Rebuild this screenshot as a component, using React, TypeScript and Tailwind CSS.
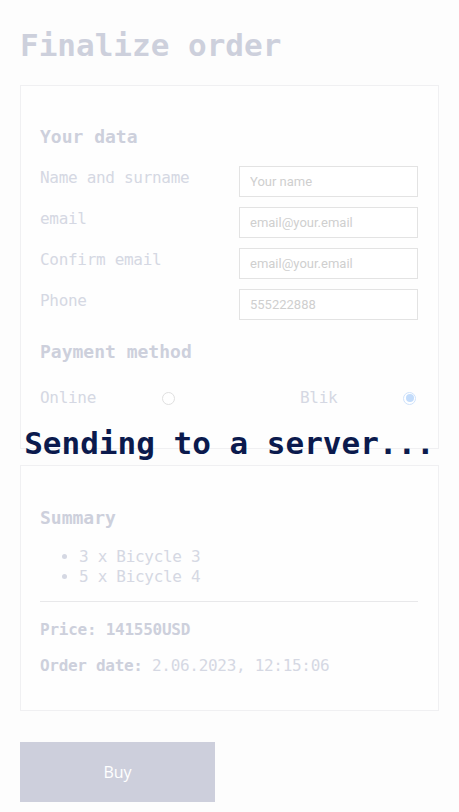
import React from "react";

const mono = { fontFamily: '"DejaVu Sans Mono", "Liberation Mono", monospace' };

function Row({ label, placeholder }: { label: string; placeholder: string }) {
  return (
    <div className="flex items-start justify-between">
      <span className="text-[16px] leading-[24px] text-[#d5d8e3] tracking-[-0.3px]">{label}</span>
      <input
        readOnly
        placeholder={placeholder}
        className="w-[179px] h-[31px] border border-[#e3e3e3] bg-white px-[10px] text-[13px] outline-none placeholder:text-[#cfcfcf]"
        style={{ fontFamily: 'Roboto, "Liberation Sans", sans-serif' }}
      />
    </div>
  );
}

function Radio({ checked }: { checked?: boolean }) {
  return checked ? (
    <span className="w-[13px] h-[13px] rounded-full border border-[#cfe2fb] bg-white flex items-center justify-center">
      <span className="w-[8px] h-[8px] rounded-full bg-[#c3dcfb]" />
    </span>
  ) : (
    <span className="w-[13px] h-[13px] rounded-full border border-[#e0e0e0] bg-white" />
  );
}

export default function App() {
  return (
    <div className="relative min-h-[886px] bg-[#fdfdfd] px-[20px] pb-[84px]" style={mono}>
      <h1 className="pt-[26px] text-[31px] leading-[38px] font-bold text-[#cdd0dc] tracking-[0px]">
        Finalize order
      </h1>

      <section className="mt-[21px] border border-[#f0f0f2] bg-[#fefefe] pl-[19px] pr-[20px] pt-[39px] pb-[38px]">
        <h2 className="text-[18px] leading-[24px] font-bold text-[#cdd0dc]">Your data</h2>
        <div className="mt-[17px] flex flex-col gap-[10px]">
          <Row label="Name and surname" placeholder="Your name" />
          <Row label="email" placeholder="email@your.email" />
          <Row label="Confirm email" placeholder="email@your.email" />
          <Row label="Phone" placeholder="555222888" />
        </div>
        <h2 className="mt-[20px] text-[18px] leading-[24px] font-bold text-[#cdd0dc]">Payment method</h2>
        <div className="mt-[22px] flex items-center text-[16px] leading-[24px] text-[#d5d8e3] tracking-[-0.3px]">
          <span className="w-[122px]">Online</span>
          <Radio />
          <span className="ml-[125px] w-[103px]">Blik</span>
          <Radio checked />
        </div>
      </section>

      <section className="mt-[16px] border border-[#f0f0f2] bg-[#fefefe] pl-[19px] pr-[20px] pt-[40px] pb-[32px]">
        <h2 className="text-[18px] leading-[24px] font-bold text-[#cdd0dc]">Summary</h2>
        <ul className="mt-[17px] list-disc pl-[39px] text-[16px] leading-[20px] text-[#d5d8e3] tracking-[-0.3px] marker:text-[#d5d8e3]">
          <li>3 x Bicycle 3</li>
          <li>5 x Bicycle 4</li>
        </ul>
        <hr className="mt-[14px] border-0 border-t border-[#e8e8ea]" />
        <p className="mt-[16px] text-[16px] leading-[24px] font-bold text-[#cdd0dc] tracking-[-0.25px]">Price: 141550USD</p>
        <p className="mt-[12px] text-[16px] leading-[24px] text-[#d5d8e3] tracking-[-0.3px]">
          <span className="font-bold text-[#cdd0dc]">Order date:</span> 2.06.2023, 12:15:06
        </p>
      </section>

      <button
        className="mt-[31px] w-[195px] h-[60px] bg-[#cdcfdc] text-white text-[16px]"
        style={{ fontFamily: '"Open Sans", "Noto Sans", sans-serif' }}
      >
        Buy
      </button>

      <div className="absolute left-0 right-0 top-[424px] text-center text-[31px] leading-[38px] font-bold text-[#0b1a4d]">
        Sending to a server...
      </div>
    </div>
  );
}
